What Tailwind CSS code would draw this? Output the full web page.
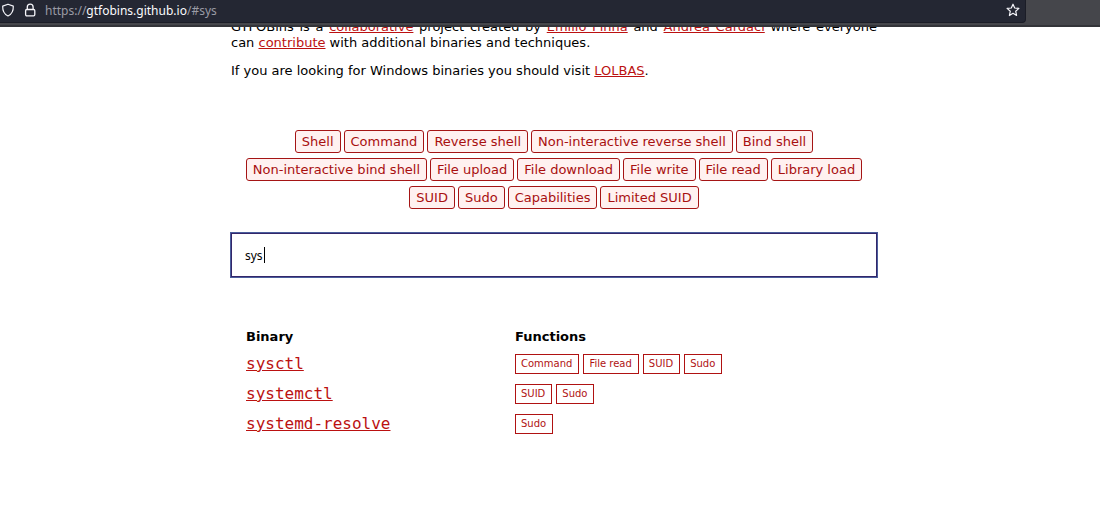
<!DOCTYPE html>
<html lang="en">
<head>
<meta charset="utf-8">
<title>GTFOBins</title>
<script src="https://cdn.jsdelivr.net/npm/@tailwindcss/browser@4"></script>
</head>
<body class="bg-white text-black font-['DejaVu_Sans',sans-serif] text-[13px] leading-4 overflow-hidden">
<header class="relative z-10 flex h-[27px] bg-[#45464b] border-b-2 border-[#333439]">
  <div class="flex h-[23px] w-[1026px] items-center rounded-br border-b border-r border-[#1b1d27] bg-[#242733] pr-[5px] pl-px text-[#f5f5fa]">
    <svg class="size-[14px] shrink-0 -mt-[2px]" viewBox="0 0 14 14" fill="none" stroke="currentColor" stroke-width="1.2" stroke-linejoin="round" aria-hidden="true"><path d="M7 1.2 12.3 3.1C12.5 7.600 10.900 11.200 7 13C3.100 11.200 1.500 7.600 1.700 3.100Z"/></svg>
    <svg class="ml-2 size-[14px] shrink-0 -mt-[2px]" viewBox="0 0 14 14" fill="none" stroke="currentColor" stroke-width="1.3" aria-hidden="true"><rect x="2.600" y="6.500" width="9.200" height="6.300" rx="1.200"/><path d="M4.300 6.500V4a2.900 2.900 0 0 1 5.800 0v2.500"/></svg>
    <div class="ml-2 flex-1 whitespace-nowrap font-['Noto_Sans',sans-serif] text-[12px] text-[#9a9ba5]">https://<span class="text-[#fbfbfe]">gtfobins.github.io</span>/#sys</div>
    <button type="button" aria-label="Bookmark this page" class="-mt-[2px]"><svg class="size-[14px]" viewBox="0 0 14 14" fill="none" stroke="currentColor" stroke-width="1.2" stroke-linejoin="round"><path d="M7 1.200 8.700 5 12.900 5.400 9.700 8.200 10.600 12.500 7 10.300 3.400 12.500 4.300 8.200 1.100 5.400 5.300 5Z"/></svg></button>
  </div>
</header>
<div class="pl-2">
<main class="mx-auto -mt-2 w-[646px] max-w-full">
  <p class="text-justify">GTFOBins is a <a href="#" class="text-[#bb1111] underline">collaborative</a> project created by <a href="#" class="text-[#bb1111] underline">Emilio Pinna</a> and <a href="#" class="text-[#bb1111] underline">Andrea Cardaci</a> where everyone can <a href="#" class="text-[#bb1111] underline">contribute</a> with additional binaries and techniques.</p>
  <p class="mt-3">If you are looking for Windows binaries you should visit <a href="#" class="text-[#bb1111] underline">LOLBAS</a>.</p>
  <ul class="mt-[51px] flex flex-wrap justify-center gap-x-[3px] gap-y-[5px] px-3 text-[#a80f0f] *:flex">
    <li><button type="button" class="h-[23px] rounded-[3px] border border-[#a51515] bg-[#fff1f0] px-[6px]">Shell</button></li>
    <li><button type="button" class="h-[23px] rounded-[3px] border border-[#a51515] bg-[#fff1f0] px-[6px]">Command</button></li>
    <li><button type="button" class="h-[23px] rounded-[3px] border border-[#a51515] bg-[#fff1f0] px-[6px]">Reverse shell</button></li>
    <li><button type="button" class="h-[23px] rounded-[3px] border border-[#a51515] bg-[#fff1f0] px-[6px]">Non-interactive reverse shell</button></li>
    <li><button type="button" class="h-[23px] rounded-[3px] border border-[#a51515] bg-[#fff1f0] px-[6px]">Bind shell</button></li>
    <li><button type="button" class="h-[23px] rounded-[3px] border border-[#a51515] bg-[#fff1f0] px-[6px]">Non-interactive bind shell</button></li>
    <li><button type="button" class="h-[23px] rounded-[3px] border border-[#a51515] bg-[#fff1f0] px-[6px]">File upload</button></li>
    <li><button type="button" class="h-[23px] rounded-[3px] border border-[#a51515] bg-[#fff1f0] px-[6px]">File download</button></li>
    <li><button type="button" class="h-[23px] rounded-[3px] border border-[#a51515] bg-[#fff1f0] px-[6px]">File write</button></li>
    <li><button type="button" class="h-[23px] rounded-[3px] border border-[#a51515] bg-[#fff1f0] px-[6px]">File read</button></li>
    <li><button type="button" class="h-[23px] rounded-[3px] border border-[#a51515] bg-[#fff1f0] px-[6px]">Library load</button></li>
    <li><button type="button" class="h-[23px] rounded-[3px] border border-[#a51515] bg-[#fff1f0] px-[6px]">SUID</button></li>
    <li><button type="button" class="h-[23px] rounded-[3px] border border-[#a51515] bg-[#fff1f0] px-[6px]">Sudo</button></li>
    <li><button type="button" class="h-[23px] rounded-[3px] border border-[#a51515] bg-[#fff1f0] px-[6px]">Capabilities</button></li>
    <li><button type="button" class="h-[23px] rounded-[3px] border border-[#a51515] bg-[#fff1f0] px-[6px]">Limited SUID</button></li>
  </ul>
  <div class="relative mt-6 flex">
    <input type="text" value="sys" aria-label="Search binaries" class="h-11 w-full border border-[#33266a] px-[13px] font-['Noto_Sans',sans-serif] text-[12px] outline outline-[#4a5d9c]">
    <span class="absolute top-[14px] left-[33px] h-4 w-px bg-black" aria-hidden="true"></span>
  </div>
  <table class="mt-[52px] w-full table-fixed text-left">
    <thead>
      <tr class="h-5"><th class="w-[284px] pl-[15px] pb-1 font-bold">Binary</th><th class="pb-1 font-bold">Functions</th></tr>
    </thead>
    <tbody class="text-[10px] text-[#b01212]">
      <tr class="h-[30px]">
        <td class="pl-[15px] font-['DejaVu_Sans_Mono',monospace] text-base"><a href="#" class="text-[#bb1111] underline">sysctl</a></td>
        <td><div class="flex gap-1"><a href="#" class="border border-[#b01212] pl-[5px] pr-[6px] py-px">Command</a><a href="#" class="border border-[#b01212] pl-[5px] pr-[6px] py-px">File read</a><a href="#" class="border border-[#b01212] pl-[5px] pr-[6px] py-px">SUID</a><a href="#" class="border border-[#b01212] pl-[5px] pr-[6px] py-px">Sudo</a></div></td>
      </tr>
      <tr class="h-[30px]">
        <td class="pl-[15px] font-['DejaVu_Sans_Mono',monospace] text-base"><a href="#" class="text-[#bb1111] underline">systemctl</a></td>
        <td><div class="flex gap-1"><a href="#" class="border border-[#b01212] pl-[5px] pr-[6px] py-px">SUID</a><a href="#" class="border border-[#b01212] pl-[5px] pr-[6px] py-px">Sudo</a></div></td>
      </tr>
      <tr class="h-[30px]">
        <td class="pl-[15px] font-['DejaVu_Sans_Mono',monospace] text-base"><a href="#" class="text-[#bb1111] underline">systemd-resolve</a></td>
        <td><div class="flex gap-1"><a href="#" class="border border-[#b01212] pl-[5px] pr-[6px] py-px">Sudo</a></div></td>
      </tr>
    </tbody>
  </table>
</main>
</div>
</body>
</html>
